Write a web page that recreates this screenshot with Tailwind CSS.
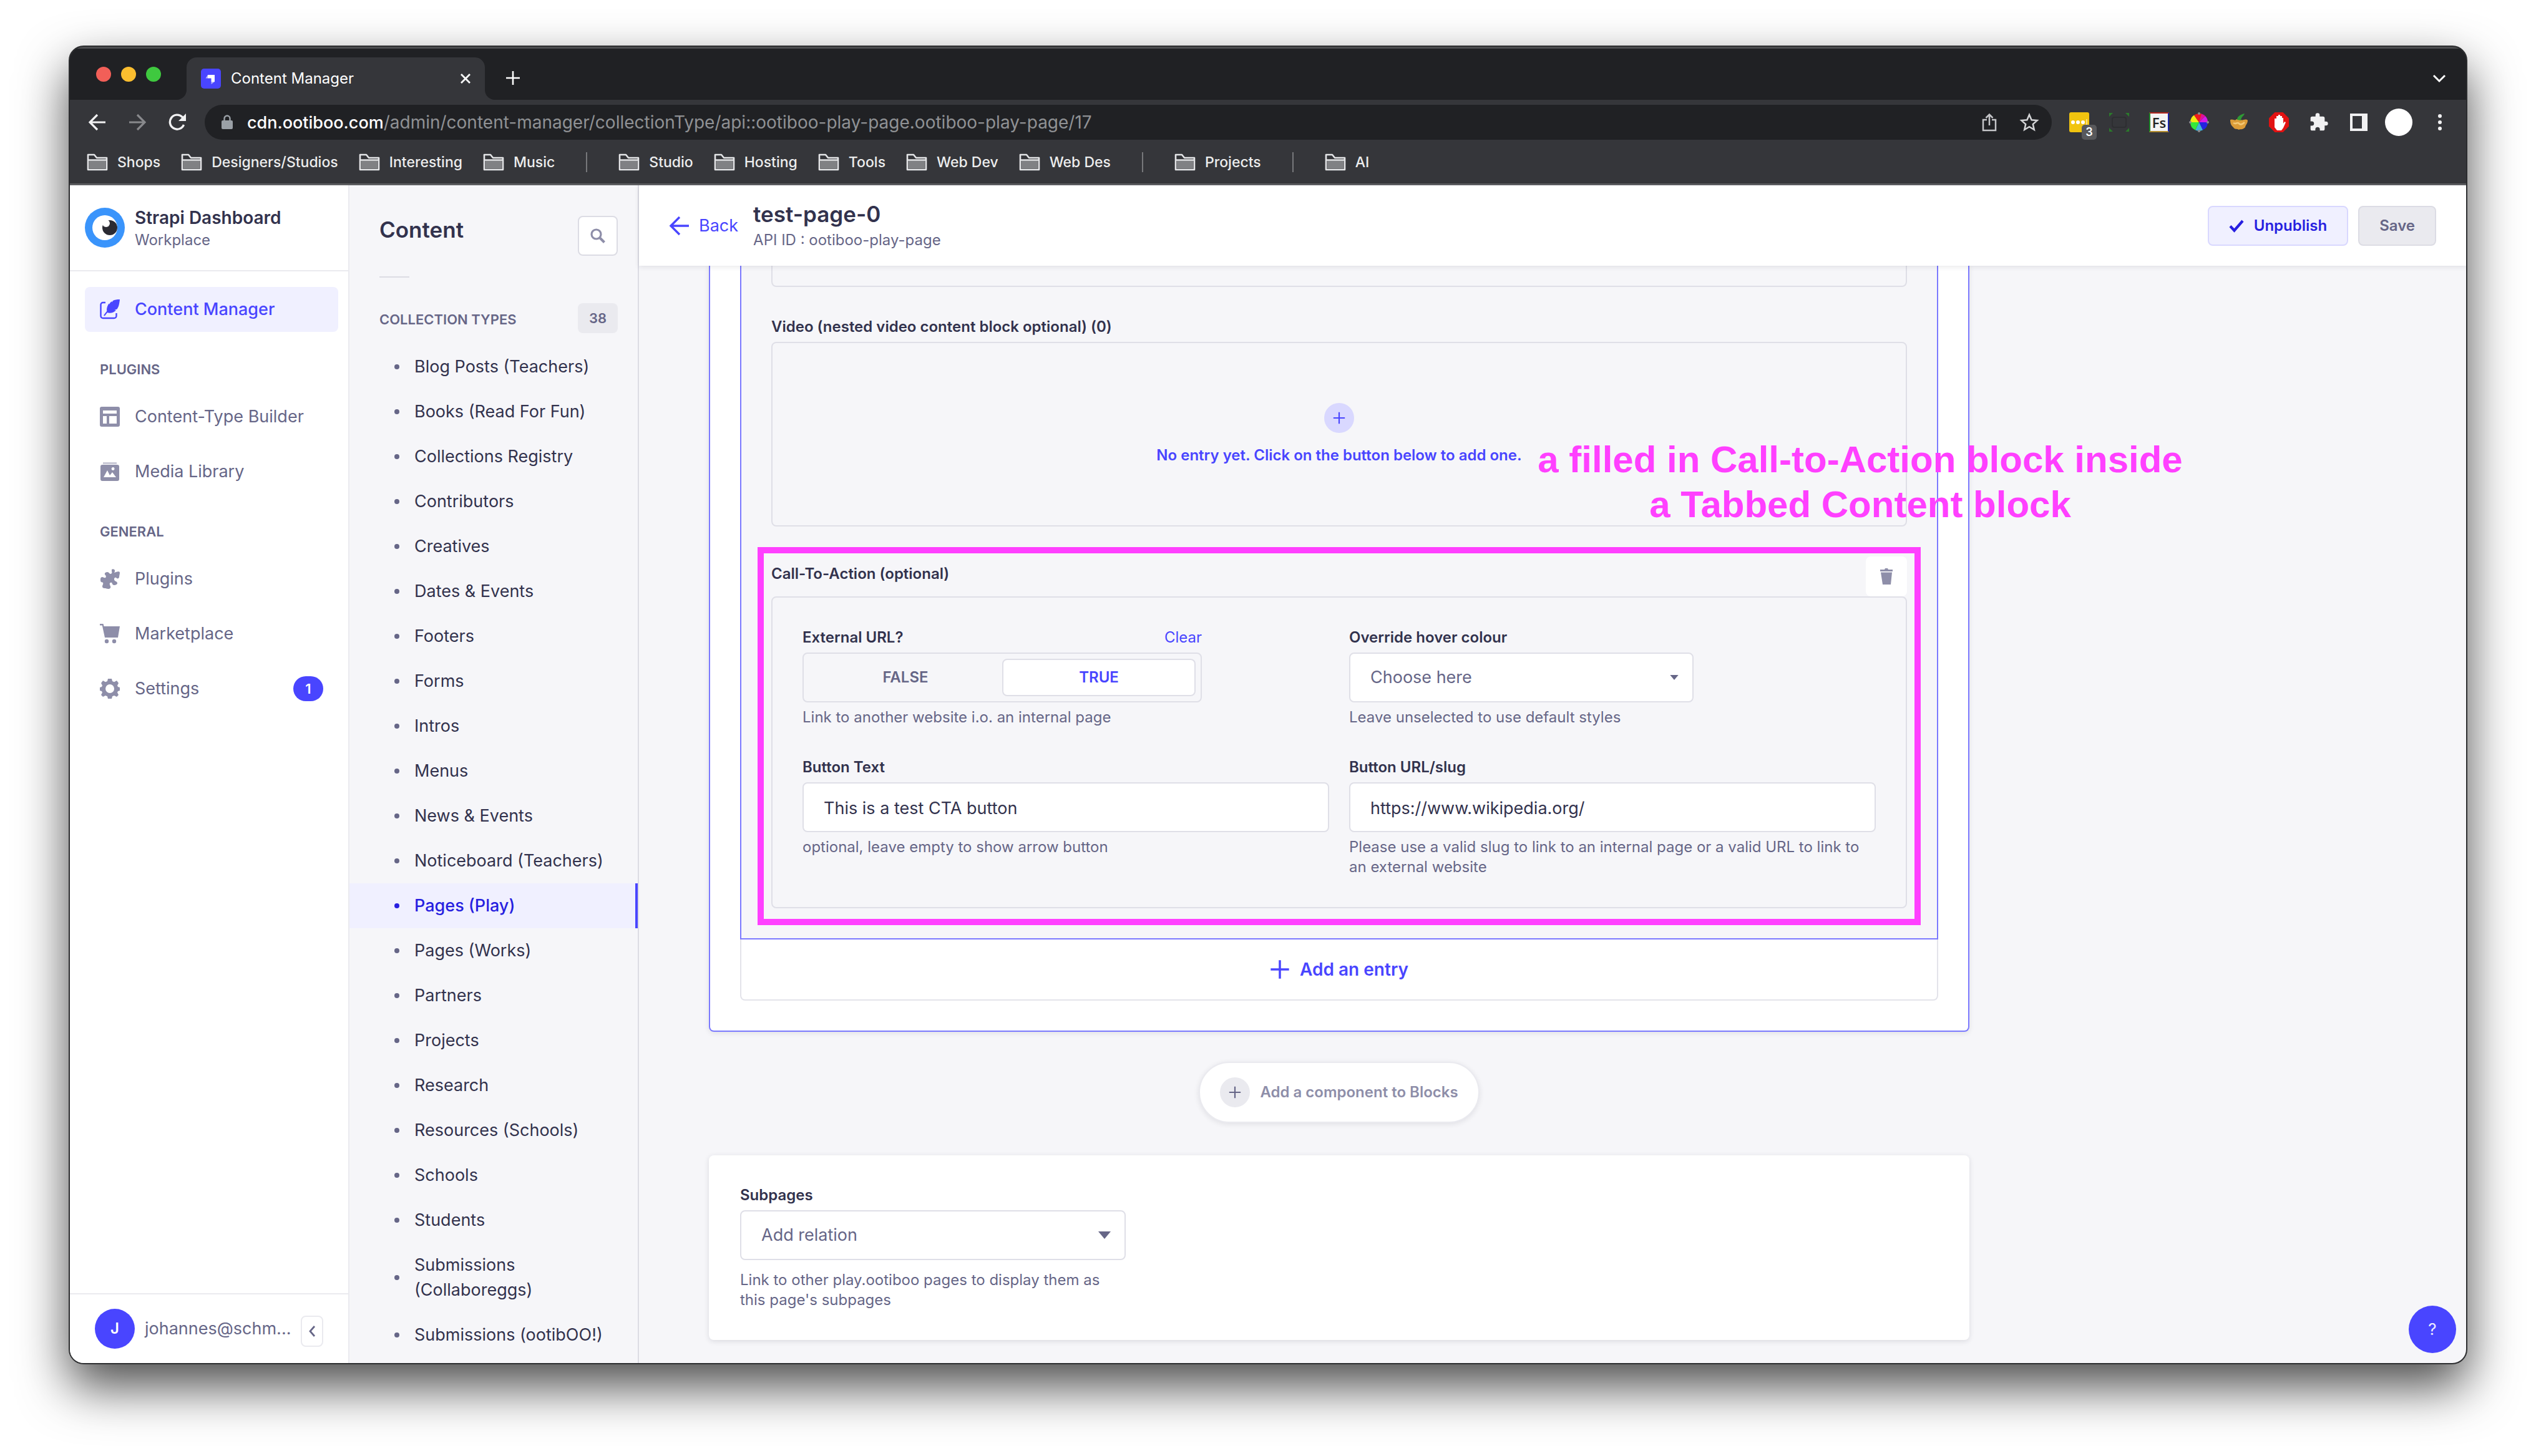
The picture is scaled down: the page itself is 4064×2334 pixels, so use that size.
<!DOCTYPE html>
<html lang="en">
<head>
<meta charset="utf-8">
<title>Content Manager</title>
<script src="https://cdn.jsdelivr.net/npm/@tailwindcss/browser@4"></script>
</head>
<body class="flex min-h-screen flex-col bg-white px-[110px] pt-[73px] pb-[147px] font-['Inter',sans-serif] text-[27px] leading-10 text-[#32324d]">

<!-- Shared icons -->
<svg class="hidden" aria-hidden="true">
  <symbol id="folder" viewBox="0 0 34 28"><path d="M2 26V2h10l4 5h16v19z" fill="none" stroke="#e4e5e7" stroke-width="2.6" stroke-linejoin="round"/><path d="M3.5 11h27v13.500h-27z" fill="#808184"/><path d="M2 10.500h30" stroke="#e4e5e7" stroke-width="2.400"/></symbol>
  <symbol id="plus" viewBox="0 0 24 24"><path d="M12 1v22M1 12h22" fill="none" stroke="currentColor" stroke-width="2.600"/></symbol>
  <symbol id="caret" viewBox="0 0 20 12"><path d="M0 0h20L10 12z" fill="currentColor"/></symbol>
  <symbol id="puzzle" viewBox="0 0 24 24"><path d="M20.500 11H19V7a2 2 0 0 0-2-2h-4V3.500a2.500 2.500 0 0 0-5 0V5H4a2 2 0 0 0-2 2v3.800h1.500a2.700 2.700 0 0 1 0 5.400H2V20a2 2 0 0 0 2 2h3.800v-1.500a2.700 2.700 0 0 1 5.400 0V22H17a2 2 0 0 0 2-2v-4h1.500a2.500 2.500 0 0 0 0-5z" fill="currentColor"/></symbol>
</svg>

<div class="flex flex-1 flex-col overflow-hidden rounded-[24px] border-2 border-[#2c2d2f] bg-[#35363a] shadow-[0_36px_80px_rgba(0,0,0,0.7)]">

  <!-- Tab strip -->
  <div class="flex h-[85px] items-center border-t-3 border-[#4c4d4f] bg-[#202124] pl-[42px] pr-8 text-white">
    <div class="flex gap-4">
      <span class="size-6 rounded-full bg-[#f25f58]"></span>
      <span class="size-6 rounded-full bg-[#fbbe2f]"></span>
      <span class="size-6 rounded-full bg-[#3fc93f]"></span>
    </div>
    <div class="relative ml-[41px] flex h-[68px] w-[478px] items-center gap-4 self-end rounded-t-[16px] bg-[#35363a] pl-[23px] pr-[22px]">
      <svg class="absolute bottom-0 -left-4 size-4" viewBox="0 0 16 16"><path d="M16 0v16H0A16 16 0 0 0 16 0z" fill="#35363a"/></svg>
      <svg class="absolute bottom-0 -right-4 size-4" viewBox="0 0 16 16"><path d="M0 0v16h16A16 16 0 0 1 0 0z" fill="#35363a"/></svg>
      <svg class="size-8 shrink-0" viewBox="0 0 32 32"><rect width="32" height="32" rx="5" fill="#4945ff"/><path d="M11 10h11v11h-5.500v-5.500H11z" fill="#fff"/><path d="M11 10v5.500H7.500zM16.500 21H22l-5.500 4z" fill="#b8b6ff"/></svg>
      <span class="flex-1 text-[24px] leading-8">Content Manager</span>
      <button aria-label="Close tab"><svg class="size-[18px]" viewBox="0 0 18 18"><path d="M2 2l14 14M16 2L2 16" stroke="#fff" stroke-width="2.800"/></svg></button>
    </div>
    <button aria-label="New tab" class="mt-3 ml-[33px]"><svg class="size-6"><use href="#plus"/></svg></button>
    <button aria-label="Search tabs" class="ml-auto mt-4"><svg class="size-[22px]" viewBox="0 0 22 22"><path d="M2 5l9 9 9-9" fill="none" stroke="#fff" stroke-width="3"/></svg></button>
  </div>

  <!-- Toolbar -->
  <div class="flex h-[72px] items-center pl-[30px] pr-[26px] text-white">
    <div class="flex gap-9">
      <button aria-label="Back"><svg class="size-7" viewBox="0 0 28 28"><path d="M27 14H3M14 2L2 14l12 12" fill="none" stroke="#f1f1f2" stroke-width="3.200"/></svg></button>
      <button aria-label="Forward"><svg class="size-7" viewBox="0 0 28 28"><path d="M1 14h24M14 2l12 12-12 12" fill="none" stroke="#88898c" stroke-width="3.200"/></svg></button>
      <button aria-label="Reload"><svg class="size-7" viewBox="0 0 28 28"><path d="M24.500 18A11.500 11.500 0 1 1 22 5.500l3 3" fill="none" stroke="#f1f1f2" stroke-width="3.400"/><path d="M28 0v12H16z" fill="#f1f1f2"/></svg></button>
    </div>
    <div class="ml-[30px] flex h-14 flex-1 items-center rounded-full bg-[#202124] pl-[27px] pr-[20px]">
      <svg class="h-6 w-[18px]" viewBox="0 0 18 24"><rect y="9" width="18" height="14" rx="2" fill="#9aa0a6"/><path d="M4.500 10V6a4.500 4.500 0 0 1 9 0v4" fill="none" stroke="#9aa0a6" stroke-width="2.400"/></svg>
      <span class="ml-[23px] flex-1 text-[28px] text-[#8f9194]"><span class="text-[27px] font-medium text-white">cdn.ootiboo.com</span>/admin/content-manager/collectionType/api::ootiboo-play-page.ootiboo-play-page/17</span>
      <button aria-label="Share"><svg class="size-8" viewBox="0 0 32 32"><path d="M12 12H6v17h20V12h-6M16 21V4M10.500 9L16 3.500 21.500 9" fill="none" stroke="#c4c5c8" stroke-width="2.500"/></svg></button>
      <button aria-label="Bookmark" class="ml-8"><svg class="size-8" viewBox="0 0 32 32"><path d="M16 4l3.600 8.300 9 .8-6.800 6 2 8.900L16 23.300 8.200 28l2-8.900-6.800-6 9-.8z" fill="none" stroke="#d4d5d7" stroke-width="2.500"/></svg></button>
    </div>
    <div class="ml-[28px] flex items-center gap-8">
      <button aria-label="Password manager" class="relative size-8">
        <svg class="size-8" viewBox="0 0 32 32"><rect width="32" height="32" rx="3" fill="#f1c40f"/><circle cx="6" cy="16" r="3" fill="#fff"/><circle cx="14" cy="16" r="3" fill="#fff"/><circle cx="22" cy="16" r="3" fill="#fff"/><path d="M28 11v10" stroke="#f8e08a" stroke-width="2"/></svg>
        <span class="absolute top-5 left-5 flex h-6 w-6 items-center justify-center rounded-[5px] bg-[#58595c] text-[18px] leading-6 font-semibold">3</span>
      </button>
      <svg class="size-8" viewBox="0 0 32 32"><path d="M0 1h6L0 7zM32 1v6l-6-6zM0 31v-6l6 6zM32 31h-6l6-6z" fill="#2b7a2b"/><rect x="5" y="8" width="22" height="16" rx="3" fill="none" stroke="#2d2e31" stroke-width="2"/></svg>
      <button aria-label="Font finder" class="flex size-8 items-center justify-center border-2 border-t-[#b3261e] border-r-[#1a22a8] border-b-[#b0892a] border-l-[#1e8a2a] bg-[#f4f4f4] font-['Open_Sans',sans-serif] text-[22px] leading-7 font-semibold text-[#222222]">Fs</button>
      <svg class="size-8" viewBox="0 0 32 32"><g transform="translate(16 16)"><path d="M0 0V-14A14 14 0 0 1 10-10z" fill="#e0109a"/><path d="M0 0l10-10A14 14 0 0 1 14 0z" fill="#d51be8"/><path d="M0 0h14A14 14 0 0 1 6 12.600z" fill="#2323e0"/><path d="M0 0l6 12.600A14 14 0 0 1-6 12.600z" fill="#3fb5d8"/><path d="M0 0l-6 12.600A14 14 0 0 1-14 0z" fill="#35e83a"/><path d="M0 0h-14A14 14 0 0 1-8-11.500z" fill="#f2ea12"/><path d="M0 0l-8-11.500A14 14 0 0 1 4-13.400z" fill="#ee1c1c"/></g><circle cx="16" cy="2" r="2" fill="#8a8b8e"/><circle cx="16" cy="30" r="2" fill="#8a8b8e"/><circle cx="2" cy="16" r="2" fill="#8a8b8e"/><circle cx="30" cy="16" r="2" fill="#8a8b8e"/></svg>
      <svg class="size-8" viewBox="0 0 32 32"><path d="M2 12c4-2 7 2 9 0s6-2 8 0 8-3 11 1c0 5-4 8-4 11-5 5-8 2-10 4-3-2-7 0-9-4-4-3-5-7-5-12z" fill="#dc9c38"/><path d="M7 17c4 3 6-2 9 1s6 1 9-2" fill="none" stroke="#f3c875" stroke-width="2.500"/><path d="M13 12c0-5 4-8 12-10-1 4-5 4-6 11z" fill="#2f9a35"/></svg>
      <svg class="size-8" viewBox="0 0 32 32"><path d="M9.500 0h13L32 9.500v13L22.500 32h-13L0 22.500v-13z" fill="#e21212"/><path d="M9 10h3V6h3V4h3v2h3v3h2v9l2-3 2 1-4 9-3 4h-7l-4-5z" fill="#fff"/></svg>
      <button aria-label="Extensions"><svg class="size-8 text-[#f1f1f2]"><use href="#puzzle"/></svg></button>
      <button aria-label="Side panel"><svg class="size-8" viewBox="0 0 32 32"><path d="M4 4h24v24H4z" fill="none" stroke="#f1f1f2" stroke-width="4"/><path d="M21 4h7v24h-7z" fill="#f1f1f2"/></svg></button>
    </div>
    <span class="ml-[26px] size-11 rounded-full bg-white"></span>
    <button aria-label="Menu" class="ml-7"><svg class="h-8 w-8" viewBox="0 0 32 32"><circle cx="16" cy="6" r="3" fill="#f1f1f2"/><circle cx="16" cy="16" r="3" fill="#f1f1f2"/><circle cx="16" cy="26" r="3" fill="#f1f1f2"/></svg></button>
  </div>

  <!-- Bookmarks -->
  <nav class="flex h-[65px] items-center gap-[33px] border-b-3 border-[#5c5d60] pb-[6px] pl-[27px] text-[23px] leading-8 font-medium text-[#eceded]">
    <a href="#" class="flex items-center gap-[15px]"><svg class="h-7 w-[34px]"><use href="#folder"/></svg>Shops</a>
    <a href="#" class="flex items-center gap-[15px]"><svg class="h-7 w-[34px]"><use href="#folder"/></svg>Designers/Studios</a>
    <a href="#" class="flex items-center gap-[15px]"><svg class="h-7 w-[34px]"><use href="#folder"/></svg>Interesting</a>
    <a href="#" class="flex items-center gap-[15px]"><svg class="h-7 w-[34px]"><use href="#folder"/></svg>Music</a>
    <span class="mx-[17px] h-8 w-0.5 bg-[#77787b]"></span>
    <a href="#" class="flex items-center gap-[15px]"><svg class="h-7 w-[34px]"><use href="#folder"/></svg>Studio</a>
    <a href="#" class="flex items-center gap-[15px]"><svg class="h-7 w-[34px]"><use href="#folder"/></svg>Hosting</a>
    <a href="#" class="flex items-center gap-[15px]"><svg class="h-7 w-[34px]"><use href="#folder"/></svg>Tools</a>
    <a href="#" class="flex items-center gap-[15px]"><svg class="h-7 w-[34px]"><use href="#folder"/></svg>Web Dev</a>
    <a href="#" class="flex items-center gap-[15px]"><svg class="h-7 w-[34px]"><use href="#folder"/></svg>Web Des</a>
    <span class="mx-[17px] h-8 w-0.5 bg-[#77787b]"></span>
    <a href="#" class="flex items-center gap-[15px]"><svg class="h-7 w-[34px]"><use href="#folder"/></svg>Projects</a>
    <span class="mx-[17px] h-8 w-0.5 bg-[#77787b]"></span>
    <a href="#" class="flex items-center gap-[15px]"><svg class="h-7 w-[34px]"><use href="#folder"/></svg>AI</a>
  </nav>

  <div class="flex flex-1 bg-[#f6f6f9]">

    <!-- Main navigation -->
    <aside class="flex w-[448px] shrink-0 flex-col border-r-2 border-[#eaeaef] bg-white text-[#666687]">
      <div class="flex h-[138px] items-center gap-4 border-b-2 border-[#eaeaef] pl-6">
        <svg class="size-16" viewBox="0 0 64 64"><circle cx="32" cy="32" r="32" fill="#3a94fb"/><circle cx="32" cy="32" r="20" fill="#fff"/><circle cx="40" cy="32" r="12" fill="#2b2b33"/><circle cx="34" cy="25" r="6" fill="#fff"/></svg>
        <div class="pt-1">
          <div class="text-[28px] leading-9 font-semibold text-[#32324d]">Strapi Dashboard</div>
          <div class="text-[24px] leading-9">Workplace</div>
        </div>
      </div>
      <nav class="flex flex-1 flex-col pl-6 pr-4 pt-[25px]">
        <a href="#" class="flex h-[72px] items-center gap-6 rounded-[8px] bg-[#f0f0ff] px-6 font-medium text-[#4945ff]">
          <svg class="size-8" viewBox="0 0 32 32"><path d="M9 5H5a3.500 3.500 0 0 0-3.500 3.500v18A3.500 3.500 0 0 0 5 30h18a3.500 3.500 0 0 0 3.500-3.500V22" fill="none" stroke="currentColor" stroke-width="2.400"/><path d="M32 0c-5 0-8 .5-11 2l-1.500 2.500L19 3c-2 1.500-3 3-4 5l-.6-1.500c-2.500 4-4 9-3 12L6 25.500l1.800 1L12 21c4 1.500 10 .5 14-3.500l-2.500-.5 4-1.500c2-2.500 3.500-6 4.500-15.500z" fill="currentColor"/></svg>
          Content Manager</a>
        <h2 class="mt-11 pl-6 text-[22px] leading-8 font-semibold">PLUGINS</h2>
        <div class="mt-6 flex flex-col gap-4">
          <a href="#" class="flex h-[72px] items-center gap-6 px-6">
            <svg class="size-8" viewBox="0 0 32 32"><path d="M3 0h26a3 3 0 0 1 3 3v26a3 3 0 0 1-3 3H3a3 3 0 0 1-3-3V3a3 3 0 0 1 3-3zm2 6v5h22V6zm0 9v12h6V15zm10 0v12h12V15z" fill="#8e8ea9" fill-rule="evenodd"/></svg>
            Content-Type Builder</a>
          <a href="#" class="flex h-[72px] items-center gap-6 px-6">
            <svg class="size-8" viewBox="0 0 32 32"><path d="M5 1h22v3H5z" fill="#c8c8d6"/><path d="M4 5h24a3 3 0 0 1 3 3v20a3 3 0 0 1-3 3H4a3 3 0 0 1-3-3V8a3 3 0 0 1 3-3zm2 20h20l-6-8-4 5-4-8zM21 9a2.500 2.500 0 1 0 .1 5 2.500 2.500 0 0 0-.1-5z" fill="#8e8ea9" fill-rule="evenodd"/></svg>
            Media Library</a>
        </div>
        <h2 class="mt-11 pl-6 text-[22px] leading-8 font-semibold">GENERAL</h2>
        <div class="mt-6 flex flex-col gap-4">
          <a href="#" class="flex h-[72px] items-center gap-6 px-6">
            <svg class="size-8" viewBox="0 0 32 32"><path d="M19 1c2-2 6 0 5 3l-1 2 3-1c2 0 5-2 6 1 0 2-1 5-1 7-1 4-4 2-5 1-3-1-4 3-2 5 1 1 4 1 4 4 0 2-3 3-5 3-3 0-3-3-4-4-2-1-4 1-3 3 0 2 2 3 1 5-1 3-5 2-8 1-2 0-5 0-5-3 0-2 2-4 1-6-1-1-4 0-4-4 0-2 0-5 3-5 2 0 3 2 5 1 2-2 0-4-1-5-1-3 2-4 4-4 3 0 3 3 5 3s3-2 2-4z" fill="#8e8ea9"/></svg>
            Plugins</a>
          <a href="#" class="flex h-[72px] items-center gap-6 px-6">
            <svg class="size-8" viewBox="0 0 32 32"><path d="M0 0h5.500l1 4H32l-3 18H8L3.800 2.500H0z" fill="#8e8ea9"/><circle cx="11" cy="28" r="3.200" fill="#8e8ea9"/><circle cx="23" cy="28" r="3.200" fill="#8e8ea9"/></svg>
            Marketplace</a>
          <a href="#" class="flex h-[72px] items-center gap-6 px-6">
            <svg class="size-8" viewBox="0 0 32 32"><path d="M13 0h6l1 4 3 1.300L27 3l3 4-2 4 1 2 3 1v5l-3 1-1 2 2 4-3 3-4-2-3 1.300L19 32h-6l-1-3.700L9 27l-4 2-3-3 2-4-1-2-3-1v-5l3-1 1-2-2-4 3-4 4 2.300L12 4zm3 9a7 7 0 1 0 .1 14A7 7 0 0 0 16 9z" fill="#8e8ea9" fill-rule="evenodd"/></svg>
            <span class="flex-1">Settings</span>
            <span class="flex h-10 w-12 items-center justify-center rounded-full bg-[#4945ff] text-[22px] leading-8 font-semibold text-white">1</span></a>
        </div>
      </nav>
      <div class="flex h-[112px] items-center border-t-2 border-[#eaeaef] pl-10 pr-10">
        <span class="flex size-16 items-center justify-center rounded-full bg-[#4945ff] text-[24px] font-semibold text-white">J</span>
        <span class="ml-4">johannes@schm...</span>
        <button aria-label="Collapse the navbar" class="mt-2 ml-auto flex h-[50px] w-9 items-center justify-center rounded-[8px] border-2 border-[#eaeaef]"><svg class="h-[18px] w-[12px]" viewBox="0 0 12 18"><path d="M10 1L3 9l7 8" fill="none" stroke="#666687" stroke-width="2.800"/></svg></button>
      </div>
    </aside>

    <!-- Content sub navigation -->
    <aside class="flex w-[464px] shrink-0 flex-col border-r-2 border-[#dcdce4] pt-[49px]">
      <div class="flex items-start justify-between pl-12 pr-8">
        <h2 class="text-[35px] leading-[44px] font-semibold">Content</h2>
        <button aria-label="Search" class="flex size-16 items-center justify-center rounded-[8px] border-2 border-[#dcdce4] bg-white"><svg class="size-6" viewBox="0 0 24 24"><circle cx="9.500" cy="9.500" r="7.500" fill="none" stroke="#8e8ea9" stroke-width="3.200"/><path d="M15 15l7.500 7.500" stroke="#8e8ea9" stroke-width="4"/></svg></button>
      </div>
      <div class="mt-[33px] ml-12 h-0.5 w-12 bg-[#dcdce4]"></div>
      <div class="mt-[41px] flex items-center justify-between pl-12 pr-8 text-[22px] leading-8 font-semibold text-[#666687]">
        <h3 class="pt-1">COLLECTION TYPES</h3>
        <span class="flex h-12 w-16 items-center justify-center rounded-[8px] bg-[#eaeaef]">38</span>
      </div>
      <ul id="types" class="mt-[18px]"></ul>
    </aside>

    <!-- Edit view -->
    <main class="relative flex min-w-0 flex-1 flex-col">
      <header class="z-10 flex h-[129px] shrink-0 items-center bg-white px-12 shadow-[0_2px_8px_rgba(33,33,52,0.1)]">
        <a href="#" class="flex items-center gap-4 text-[#4945ff]"><svg class="size-8" viewBox="0 0 32 32"><path d="M32 16H3M17 2L3 16l14 14" fill="none" stroke="currentColor" stroke-width="3.400"/></svg>Back</a>
        <div class="ml-6">
          <h1 class="text-[35px] leading-[44px] font-semibold">test-page-0</h1>
          <p class="mt-0.5 text-[24px] leading-9 text-[#666687]">API ID : ootiboo-play-page</p>
        </div>
        <div class="ml-auto flex gap-4 text-[24px] leading-8 font-semibold">
          <button class="flex h-16 items-center gap-4 rounded-[8px] border-2 border-[#d9d8ff] bg-[#f0f0ff] px-8 text-[#271fe0]"><svg class="h-6 w-6" viewBox="0 0 24 24"><path d="M2 12.500l6.500 7L22 4" fill="none" stroke="currentColor" stroke-width="4.200"/></svg>Unpublish</button>
          <button class="h-16 rounded-[8px] border-2 border-[#dcdce4] bg-[#eaeaef] px-8 text-[#666687]">Save</button>
        </div>
      </header>

      <div class="grid grid-cols-12 gap-8 px-[112px] text-[24px] leading-8">
        <form class="col-span-9 flex flex-col">
          <section class="rounded-b-[8px] border-2 border-t-0 border-[#7b79ff] bg-white px-12 pb-12 shadow-[0_2px_8px_rgba(33,33,52,0.1)]">
            <div class="border-2 border-t-0 border-[#7b79ff] bg-[#f6f6f9] px-12 pb-12">
              <div class="h-[34px] rounded-b-[8px] border-2 border-t-0 border-[#dfdfe7]"></div>

              <h2 class="mt-12 font-semibold">Video (nested video content block optional) (0)</h2>
              <button type="button" class="mt-2 flex h-[296px] w-full flex-col items-center justify-center gap-5 rounded-[8px] border-2 border-[#dfdfe7] font-semibold text-[#4945ff]">
                <span class="flex size-12 items-center justify-center rounded-full bg-[#d9d8ff]"><svg class="size-5"><use href="#plus"/></svg></span>
                No entry yet. Click on the button below to add one.
              </button>

              <div class="relative mt-12">
                <div class="flex h-16 items-start justify-between">
                  <h2 class="pt-3 font-semibold">Call-To-Action (optional)</h2>
                  <button type="button" aria-label="Delete" class="flex h-16 w-[66px] items-center justify-center rounded-[8px] bg-white"><svg class="h-[26px] w-[20px]" viewBox="0 0 20 26"><path d="M0 2h7l1-2h4l1 2h7v3H0zM1 6.500h18L17 26H4z" fill="#8e8ea9"/></svg></button>
                </div>
                <div class="grid grid-cols-2 gap-x-8 gap-y-12 rounded-[8px] border-2 border-[#dfdfe7] p-12">
                  <fieldset class="w-[640px]">
                    <div class="flex justify-between">
                      <legend class="font-semibold">External URL?</legend>
                      <button type="button" class="text-[#4945ff]">Clear</button>
                    </div>
                    <div class="mt-2 grid h-20 grid-cols-2 rounded-[8px] border-2 border-[#dfdfe7] p-2 font-semibold">
                      <label class="flex items-center justify-center text-[#666687]"><input type="radio" name="external" class="sr-only">FALSE</label>
                      <label class="flex items-center justify-center rounded-[8px] border-2 border-[#dfdfe7] bg-white text-[#4945ff]"><input type="radio" name="external" class="sr-only" checked>TRUE</label>
                    </div>
                    <p class="mt-2 text-[#666687]">Link to another website i.o. an internal page</p>
                  </fieldset>
                  <div>
                    <label for="hover" class="block font-semibold">Override hover colour</label>
                    <div class="relative mt-2 w-[552px]">
                      <select id="hover" class="h-20 w-full appearance-none rounded-[8px] border-2 border-[#dfdfe7] bg-white px-8 text-[27px] text-[#666687]"><option>Choose here</option></select>
                      <svg class="pointer-events-none absolute top-9 right-6 h-2 w-[14px] text-[#666687]"><use href="#caret"/></svg>
                    </div>
                    <p class="mt-2 text-[#666687]">Leave unselected to use default styles</p>
                  </div>
                  <div>
                    <label for="btn-text" class="block font-semibold">Button Text</label>
                    <input id="btn-text" value="This is a test CTA button" class="mt-2 block h-20 w-full rounded-[8px] border-2 border-[#dfdfe7] bg-white px-8 pt-0.5 text-[27px]">
                    <p class="mt-2 text-[#666687]">optional, leave empty to show arrow button</p>
                  </div>
                  <div>
                    <label for="btn-url" class="block font-semibold">Button URL/slug</label>
                    <input id="btn-url" value="https://www.wikipedia.org/" class="mt-2 block h-20 w-full rounded-[8px] border-2 border-[#dfdfe7] bg-white px-8 pt-0.5 text-[27px]">
                    <p class="mt-2 text-[#666687]">Please use a valid slug to link to an internal page or a valid URL to link to an external website</p>
                  </div>
                </div>

                <!-- Annotation over the block -->
                <div class="pointer-events-none absolute -inset-x-[22px] -top-[15px] -bottom-[27px] border-10 border-[#ff40ff]"></div>
                <p class="absolute -top-[191px] left-[1745px] -translate-x-1/2 text-center font-['Liberation_Sans',sans-serif] text-[60px] leading-[72px] font-bold whitespace-nowrap text-[#ff40ff]">a filled in Call-to-Action block inside<br>a Tabbed Content block</p>
              </div>
            </div>
            <button type="button" class="flex h-[98px] w-full items-center justify-center gap-4 rounded-b-[8px] border-2 border-t-0 border-[#e3e3ea] text-[28px] font-semibold text-[#4945ff]"><svg class="size-8"><use href="#plus"/></svg>Add an entry</button>
          </section>

          <button type="button" class="mt-12 flex h-[98px] items-center gap-4 self-center rounded-full border-2 border-[#eaeaef] bg-white px-8 font-semibold text-[#8e8ea9] shadow-[0_2px_8px_rgba(33,33,52,0.1)]"><span class="flex size-12 items-center justify-center rounded-full bg-[#eaeaef] text-[#666687]"><svg class="size-5"><use href="#plus"/></svg></span>Add a component to Blocks</button>

          <section class="mt-[52px] rounded-[8px] bg-white px-[50px] py-12 shadow-[0_2px_8px_rgba(33,33,52,0.13)]">
            <label for="subpages" class="block font-semibold">Subpages</label>
            <div class="relative mt-2 w-[618px]">
              <select id="subpages" class="h-20 w-full appearance-none rounded-[8px] border-2 border-[#dfdfe7] bg-white px-8 text-[27px] text-[#666687]"><option>Add relation</option></select>
              <svg class="pointer-events-none absolute top-[34px] right-6 h-3 w-5 text-[#666687]"><use href="#caret"/></svg>
            </div>
            <p class="mt-4 w-[618px] text-[#666687]">Link to other play.ootiboo pages to display them as this page's subpages</p>
          </section>
        </form>
      </div>

      <button aria-label="Help" class="absolute right-4 bottom-4 flex size-[76px] items-center justify-center rounded-full bg-[#4945ff] text-[26px] text-white/90">?</button>
    </main>
  </div>
</div>

<script>
const types = ["Blog Posts (Teachers)", "Books (Read For Fun)", "Collections Registry", "Contributors", "Creatives", "Dates & Events", "Footers", "Forms", "Intros", "Menus", "News & Events", "Noticeboard (Teachers)", "Pages (Play)", "Pages (Works)", "Partners", "Projects", "Research", "Resources (Schools)", "Schools", "Students", "Submissions (Collaboreggs)", "Submissions (ootibOO!)"];
const list = document.getElementById("types");
for (const name of types) {
  const active = name === "Pages (Play)";
  const li = document.createElement("li");
  const a = document.createElement("a");
  a.href = "#";
  a.className = active
    ? "flex items-center gap-6 border-r-4 border-[#4945ff] bg-[#f0f0ff] py-4 pl-[72px] pr-7 font-medium text-[#271fe0]"
    : "flex items-center gap-6 py-4 pl-[72px] pr-8 text-[#32324d]";
  const dot = document.createElement("span");
  dot.className = active ? "size-2 shrink-0 rounded-full bg-[#271fe0]" : "size-2 shrink-0 rounded-full bg-[#666687]";
  a.append(dot, name);
  li.append(a);
  list.append(li);
}
</script>
</body>
</html>
